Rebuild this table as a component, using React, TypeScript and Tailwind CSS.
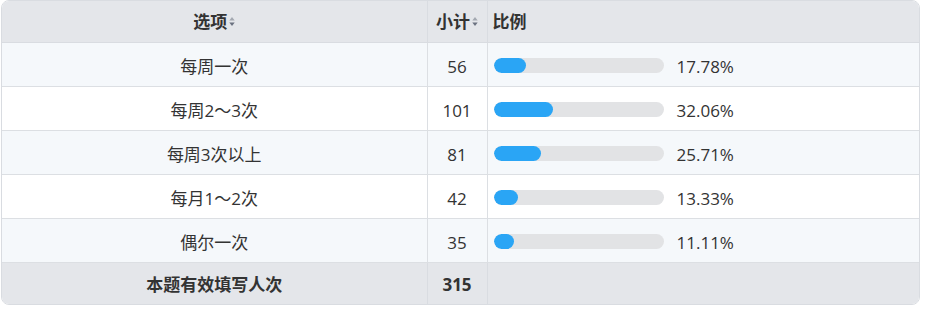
import React from 'react';

const rows = [
  { label: '每周一次', count: 56, pct: 17.78 },
  { label: '每周2～3次', count: 101, pct: 32.06 },
  { label: '每周3次以上', count: 81, pct: 25.71 },
  { label: '每月1～2次', count: 42, pct: 13.33 },
  { label: '偶尔一次', count: 35, pct: 11.11 },
];

function SortIcon() {
  return (
    <svg width="6" height="11" viewBox="0 0 6 11" className="ml-0.5 inline-block">
      <path d="M3 1 L5.7 4.5 L0.3 4.5 Z" fill="#a3a8b0" />
      <path d="M3 10 L5.7 6.5 L0.3 6.5 Z" fill="#6b7280" />
    </svg>
  );
}

export default function App() {
  return (
    <div className="pl-px bg-white" style={{ fontFamily: '"Open Sans", "Noto Sans CJK SC", sans-serif' }}>
      <div className="w-[919px] rounded-lg border border-[#d9dce1] overflow-hidden text-[#333]">
        <table className="w-full border-collapse text-[17px]">
          <colgroup>
            <col className="w-[425px]" />
            <col className="w-[60px]" />
            <col />
          </colgroup>
          <thead>
            <tr className="h-[41px] bg-[#e4e6ea] border-b border-[#d9dce1]">
              <th className="font-bold text-[17px] text-center border-r border-[#d9dce1] pt-[1px]">
                <span className="inline-flex items-center">选项<SortIcon /></span>
              </th>
              <th className="font-bold text-[17px] text-center border-r border-[#d9dce1] pt-[1px]">
                <span className="inline-flex items-center">小计<SortIcon /></span>
              </th>
              <th className="font-bold text-[17px] text-left pl-[5px] pt-[1px]">比例</th>
            </tr>
          </thead>
          <tbody>
            {rows.map((r, i) => (
              <tr key={r.label} className={`h-[44px] border-b border-[#dcdfe3] ${i % 2 === 0 ? 'bg-[#f5f8fb]' : 'bg-white'}`}>
                <td className="text-center border-r border-[#dcdfe3] pt-[5px]">{r.label}</td>
                <td className="text-center border-r border-[#dcdfe3] pt-[5px]">{r.count}</td>
                <td className="pl-[6px] pt-[2px]">
                  <div className="flex items-center">
                    <div className="w-[170px] h-[15px] rounded-full bg-[#e2e3e5] overflow-hidden">
                      <div className="h-full rounded-full bg-[#2aa5f5]" style={{ width: `${r.pct * 1.85}px` }} />
                    </div>
                    <span className="ml-[13px] pt-[3px]">{r.pct.toFixed(2)}%</span>
                  </div>
                </td>
              </tr>
            ))}
            <tr className="h-[42px] bg-[#e4e6ea]">
              <td className="text-center font-bold text-[17px] border-r border-[#d9dce1] pt-[3px]">本题有效填写人次</td>
              <td className="text-center font-bold text-[17px] border-r border-[#d9dce1] pt-[3px]">315</td>
              <td />
            </tr>
          </tbody>
        </table>
      </div>
    </div>
  );
}
